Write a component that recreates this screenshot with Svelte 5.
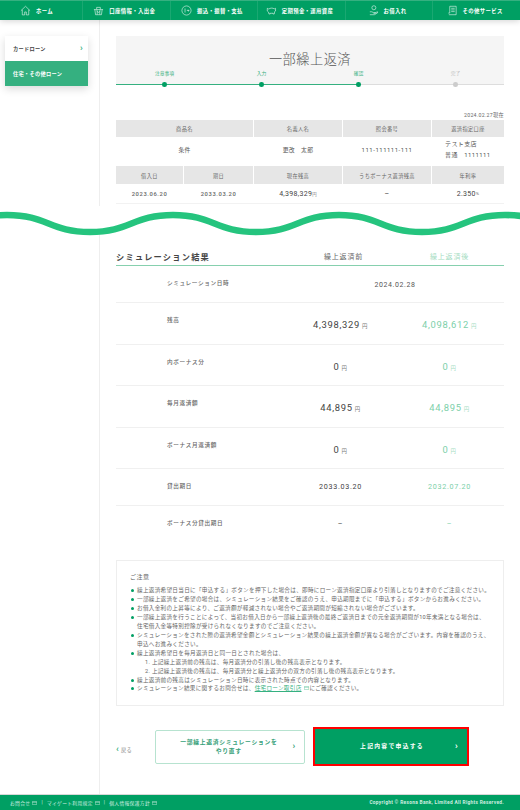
<script>
  const navItems = [
    { label: 'ホーム', icon: 'home' },
    { label: '口座情報・入出金', icon: 'basket' },
    { label: '振込・振替・支払', icon: 'transfer' },
    { label: '定期預金・運用資産', icon: 'piggy' },
    { label: 'お借入れ', icon: 'loan' },
    { label: 'その他サービス', icon: 'doc' }
  ];

  const steps = [
    { label: '注意事項', done: true },
    { label: '入力', done: true },
    { label: '確認', done: true },
    { label: '完了', done: false }
  ];

  const results = [
    { label: '残高', before: '4,398,329', after: '4,098,612', yen: true },
    { label: '内ボーナス分', before: '0', after: '0', yen: true },
    { label: '毎月返済額', before: '44,895', after: '44,895', yen: true },
    { label: 'ボーナス月返済額', before: '0', after: '0', yen: true },
    { label: '貸出期日', before: '2033.03.20', after: '2032.07.20', short: true },
    { label: 'ボーナス分貸出期日', before: '–', after: '–', short: true, last: true }
  ];

  const notes = [
    '繰上返済希望日当日に「申込する」ボタンを押下した場合は、即時にローン返済指定口座より引落しとなりますのでご注意ください。',
    '一部繰上返済をご希望の場合は、シミュレーション結果をご確認のうえ、申込期限までに「申込する」ボタンからお進みください。',
    'お借入金利の上昇等により、ご返済額が軽減されない場合やご返済期間が短縮されない場合がございます。',
    '一部繰上返済を行うことによって、当初お借入日から一部繰上返済後の最終ご返済日までの元金返済期間が10年未満となる場合は、\n住宅借入金等特別控除が受けられなくなりますのでご注意ください。',
    'シミュレーションをされた際の返済希望金額とシミュレーション結果の繰上返済金額が異なる場合がございます。内容を確認のうえ、\n申込へお進みください。'
  ];

  const footerLinks = ['お問合せ', 'マイゲート利用規定', '個人情報保護方針'];
</script>

<div class="page">
  <header class="nav">
    {#each navItems as item}
      <a class="nav-item" href="#top">
        <svg class="nav-icon" viewBox="0 0 12 12" fill="none" stroke="#fff" stroke-width="0.6">
          {#if item.icon === 'home'}
            <path d="M1 6.2 6 1.4l5 4.8M2.5 5.2v5.6h2.6V7.6h1.8v3.2h2.6V5.2" />
          {:else if item.icon === 'basket'}
            <path d="M1 5h10M2 5l.8 5.6h6.4L10 5M4.4 5V6.4a1.6 1.6 0 0 0 3.2 0V5M4 4.6V2.6h4v2M4.6 7v3.4M7.4 7v3.4" />
          {:else if item.icon === 'transfer'}
            <circle cx="6" cy="6" r="5" />
            <path d="M4.4 3.8v4.4M6.4 6h2.4M7.8 5l1 1-1 1" />
          {:else if item.icon === 'piggy'}
            <path d="M1.4 3.6 3 4.4c1.4-1.2 4.6-1.4 6-.2l1.4-.6v3l-1 .6-.4 2.6H7.6V9h-3v.8H3.2L2.8 7.8 1.4 6.6z" />
          {:else if item.icon === 'loan'}
            <circle cx="6.4" cy="3" r="2.2" />
            <path d="M2 7.4h2l2 .8h2v1H6M8 8.4l2.4-1v1.2L7 10.6H2" />
          {:else}
            <path d="M3 1.4h7v9.2H2M3 1.4v7.4H1.4M4.6 3.6h3.8M4.6 5.4h3.8M4.6 7.2h3.8" />
          {/if}
        </svg>
        <span>{item.label}</span>
      </a>
    {/each}
  </header>

  <div class="body">
    <aside class="side">
      <div class="side-card">
        <a class="side-link" href="#top">カードローン<i class="side-chev">›</i></a>
        <a class="side-link active" href="#top">住宅・その他ローン</a>
      </div>
    </aside>

    <main class="main">
      <section class="heading">
        <h1>一部繰上返済</h1>
        <ol class="steps">
          {#each steps as step}
            <li class:done={step.done}><span>{step.label}</span><b></b></li>
          {/each}
        </ol>
      </section>

      <p class="as-of">2024.02.27現在</p>

      <div class="loan-table">
        <div class="th wide">商品名</div>
        <div class="th">名義人名</div>
        <div class="th">照会番号</div>
        <div class="th">返済指定口座</div>

        <div class="td td-tall wide">条件</div>
        <div class="td td-tall">更改　太郎</div>
        <div class="td td-tall num">111-111111-111</div>
        <div class="td td-tall account">テスト支店<br />普通　1111111</div>

        <div class="th th2">借入日</div>
        <div class="th th2">期日</div>
        <div class="th th2">現在残高</div>
        <div class="th th2">うちボーナス返済残高</div>
        <div class="th th2">年利率</div>

        <div class="td td-low strong">2023.06.20</div>
        <div class="td td-low strong">2033.03.20</div>
        <div class="td td-low big">4,398,329<small>円</small></div>
        <div class="td td-low big">–</div>
        <div class="td td-low big">2.350<small>%</small></div>
      </div>

      <section class="results">
        <div class="results-head">
          <h2>シミュレーション結果</h2>
          <span class="before">繰上返済前</span>
          <span class="after">繰上返済後</span>
        </div>

        <div class="row row-first">
          <div class="row-label">シミュレーション日時</div>
          <div class="row-date">2024.02.28</div>
        </div>

        {#each results as r}
          <div class="row" class:row-short={r.short} class:row-last={r.last}>
            <div class="row-label">{r.label}</div>
            <div class="val" class:val-small={r.short}>{r.before}{#if r.yen}<small>円</small>{/if}</div>
            <div class="val after" class:val-small={r.short}>{r.after}{#if r.yen}<small>円</small>{/if}</div>
          </div>
        {/each}
      </section>

      <section class="notes">
        <h3>ご注意</h3>
        <ul>
          {#each notes as note}
            <li class="note-line">{note}</li>
          {/each}
          <li>
            繰上返済希望日を毎月返済日と同一日とされた場合は、
            <ol>
              <li>上記繰上返済前の残高は、毎月返済分の引落し後の残高表示となります。</li>
              <li>上記繰上返済後の残高は、毎月返済分と繰上返済分の双方の引落し後の残高表示となります。</li>
            </ol>
          </li>
          <li>繰上返済前の残高はシミュレーション日時に表示された時点での内容となります。</li>
          <li>シミュレーション結果に関するお問合せは、<a href="#top">住宅ローン取引店</a><svg class="ext green" viewBox="0 0 8 6"><path d="M.5.5h7v5h-7zM.5 2h7" /></svg>にご確認ください。</li>
        </ul>
      </section>

      <div class="actions">
        <a class="back" href="#top"><i>‹</i>戻る</a>
        <a class="btn btn-sub" href="#top"><span>一部繰上返済シミュレーションを<br />やり直す</span><i>›</i></a>
        <a class="btn btn-main" href="#top"><span>上記内容で申込する</span><i>›</i></a>
      </div>
    </main>
  </div>

  <svg class="wave" viewBox="0 0 520 32" width="520" height="32">
    <path d="M-76 26C-36 26-33 9 7 9C47 9 50 26 90 26C130 26 133 9 173 9C213 9 216 26 256 26C296 26 299 9 339 9C379 9 382 26 422 26C462 26 465 9 505 9C545 9 548 26 588 26V0H-76Z" fill="#fff" />
    <path d="M-76 26C-36 26-33 9 7 9C47 9 50 26 90 26C130 26 133 9 173 9C213 9 216 26 256 26C296 26 299 9 339 9C379 9 382 26 422 26C462 26 465 9 505 9C545 9 548 26 588 26" fill="none" stroke="#25c47e" stroke-width="6.6" />
  </svg>

  <footer class="foot">
    <div class="foot-links">
      {#each footerLinks as link, i}
        {#if i > 0}<span class="pipe">|</span>{/if}
        <a href="#top">{link}<svg class="ext" viewBox="0 0 8 6"><path d="M.5.5h7v5h-7zM.5 2h7" /></svg></a>
      {/each}
    </div>
    <span class="copy">Copyright © Resona Bank, Limited All Rights Reserved.</span>
  </footer>
</div>

<style>
  :global(body) {
    margin: 0;
    background: #fff;
  }

  .page {
    --green: #009f63;
    --soft: #7ccfa9;
    position: relative;
    width: 520px;
    height: 810px;
    overflow: hidden;
    display: flex;
    flex-direction: column;
    font-family: Roboto, "Noto Sans CJK JP", sans-serif;
    color: #444;
  }

  a {
    text-decoration: none;
    color: inherit;
  }

  i {
    font-style: normal;
  }

  h1, h2, h3, p, ul, ol {
    margin: 0;
    padding: 0;
    list-style: none;
    font-weight: inherit;
  }

  .nav {
    display: grid;
    grid-template-columns: 82px repeat(5, 1fr);
    height: 20px;
    flex: none;
    background: var(--green);
    border-top: 1px solid #35b080;
    box-sizing: border-box;
    box-shadow: 0 1px 6px rgba(0, 0, 0, 0.18);
    position: relative;
    z-index: 1;
  }

  .nav-item {
    display: flex;
    align-items: center;
    justify-content: center;
    gap: 5px;
    padding-right: 4px;
    color: #fff;
    font-size: 5.4px;
    font-weight: 700;
    letter-spacing: 0.35px;
    border-left: 1px solid rgba(255, 255, 255, 0.1);
  }

  .nav-item:first-child {
    border-left: 0;
    padding-right: 9px;
  }

  .nav-icon {
    width: 11px;
    height: 11px;
    flex: none;
  }

  .body {
    flex: 1;
    display: flex;
    min-height: 0;
  }

  .side {
    width: 100px;
    flex: none;
    box-sizing: border-box;
    padding: 16px 0 0 5px;
    border-right: 1px solid #eee;
  }

  .side-card {
    width: 83px;
    box-shadow: 0 3px 8px rgba(0, 0, 0, 0.15);
  }

  .side-link {
    display: flex;
    align-items: center;
    justify-content: space-between;
    height: 25px;
    padding: 0 5px 0 8px;
    box-sizing: border-box;
    background: #fff;
    font-size: 5.2px;
    font-weight: 700;
    letter-spacing: 0.3px;
    color: #444;
  }

  .side-link.active {
    background: #35b080;
    color: #fff;
  }

  .side-chev {
    color: #35b080;
    font-size: 9px;
    line-height: 1;
  }

  .main {
    flex: 1;
    padding: 16px 16px 0 16px;
    min-width: 0;
  }

  .heading {
    height: 48px;
    background: #f5f5f5;
    position: relative;
  }

  .heading h1 {
    text-align: center;
    padding-top: 14px;
    font-size: 13.2px;
    line-height: 20px;
    letter-spacing: 0.5px;
    color: #555;
    font-weight: 300;
  }

  .steps {
    position: absolute;
    left: 0;
    right: 0;
    bottom: -1px;
    display: grid;
    grid-template-columns: repeat(4, 1fr);
    height: 14px;
    border-bottom: 1px solid #ddd;
  }

  .steps::after {
    content: "";
    position: absolute;
    left: 0;
    bottom: -1px;
    width: 62.6%;
    height: 1px;
    background: #35b080;
  }

  .steps li {
    position: relative;
    text-align: center;
    font-size: 4.8px;
    line-height: 7px;
    color: #bbb;
  }

  .steps li.done {
    color: #35b080;
  }

  .steps li b {
    position: absolute;
    left: 50%;
    bottom: -3px;
    z-index: 1;
    width: 4.6px;
    height: 4.6px;
    margin-left: -2.3px;
    border-radius: 50%;
    background: #ccc;
  }

  .steps li.done b {
    background: var(--green);
  }

  .as-of {
    margin-top: 26px;
    height: 10px;
    line-height: 10px;
    text-align: right;
    font-size: 5.2px;
    letter-spacing: 0.3px;
    color: #666;
  }

  .loan-table {
    display: grid;
    grid-template-columns: 67px 69px 88px 88px 1fr;
    column-gap: 1px;
    align-items: stretch;
    border-bottom: 1px solid #f2f2f2;
  }

  .th {
    display: flex;
    align-items: center;
    justify-content: center;
    height: 17px;
    background: #e6e6e6;
    font-size: 5.2px;
    letter-spacing: 0.4px;
    color: #666;
  }

  .th2 {
    height: 18px;
  }

  .wide {
    grid-column: span 2;
  }

  .td {
    display: flex;
    align-items: center;
    justify-content: center;
    font-size: 5.8px;
    letter-spacing: 0.3px;
    color: #555;
  }

  .td-tall {
    height: 25px;
    margin-bottom: 4px;
  }

  .td-low {
    height: 19px;
  }

  .num {
    font-size: 6px;
    letter-spacing: 0.5px;
  }

  .account {
    justify-content: flex-start;
    padding-left: 13px;
    line-height: 10.5px;
    font-size: 6px;
    letter-spacing: 0.4px;
  }

  .strong {
    font-weight: 500;
    letter-spacing: 0.6px;
    color: #666;
  }

  .big {
    font-size: 7px;
    font-weight: 400;
    letter-spacing: 0.3px;
    color: #444;
  }

  .big small {
    font-size: 4.4px;
    font-weight: 400;
    color: #777;
  }

  .results {
    margin-top: 42px;
  }

  .results-head {
    display: grid;
    grid-template-columns: 170px 109px 1fr;
    align-items: center;
    height: 19px;
    border-bottom: 1px solid #86d0ae;
    text-align: center;
    font-size: 7px;
    letter-spacing: 0.8px;
    color: #666;
  }

  .results-head h2 {
    text-align: left;
    font-size: 8.2px;
    font-weight: 700;
    letter-spacing: 1.25px;
    color: #444;
  }

  .results-head .before {
    padding-left: 6px;
  }

  .results-head .after {
    color: #a5dcc2;
  }

  .row {
    display: grid;
    grid-template-columns: 170px 109px 1fr;
    height: 41.5px;
    box-sizing: border-box;
    border-bottom: 1px solid #f0f0f0;
  }

  .row-first {
    height: 37px;
  }

  .row-short {
    height: 37px;
  }

  .row-last {
    height: 54px;
    border-bottom: 0;
  }

  .row-label {
    padding: 13px 0 0 51px;
    font-size: 5.6px;
    line-height: 8px;
    font-weight: 500;
    letter-spacing: 0.65px;
    color: #666;
  }

  .row-date {
    grid-column: span 2;
    padding-top: 15px;
    text-align: center;
    font-size: 7px;
    line-height: 9px;
    letter-spacing: 0.6px;
    color: #555;
  }

  .val {
    padding-top: 16px;
    text-align: center;
    font-size: 9.4px;
    line-height: 12px;
    font-weight: 400;
    letter-spacing: 0.7px;
    color: #444;
  }

  .val small {
    margin-left: 2px;
    font-size: 5.4px;
    font-weight: 400;
    color: #777;
  }

  .val.after {
    color: #7ccfa9;
  }

  .val.after small {
    color: #a5dcc2;
  }

  .val-small {
    padding-top: 12px;
    font-size: 7.2px;
    letter-spacing: 0.7px;
  }

  .notes {
    height: 146px;
    box-sizing: border-box;
    border: 1px solid #eee;
    padding: 11px 12px 0 13px;
    color: #666;
    font-size: 5.6px;
    line-height: 8.95px;
    letter-spacing: 0.3px;
  }

  .notes h3 {
    font-size: 6px;
    line-height: 9px;
    letter-spacing: 0.5px;
    margin-bottom: 5px;
  }

  .notes ul > li {
    position: relative;
    padding-left: 7px;
  }

  .notes .note-line {
    white-space: pre-line;
  }

  .notes ul > li::before {
    content: "";
    position: absolute;
    left: 1px;
    top: 3px;
    width: 3px;
    height: 3px;
    border-radius: 50%;
    background: var(--green);
  }

  .notes ol {
    padding-left: 8px;
    counter-reset: note;
  }

  .notes ol li {
    counter-increment: note;
  }

  .notes ol li::before {
    content: counter(note) ". ";
  }

  .notes a {
    color: #35b080;
    text-decoration: underline;
  }

  .ext {
    display: inline-block;
    width: 5px;
    height: 4px;
    margin-left: 2px;
    fill: none;
    stroke: #fff;
    stroke-width: 0.6;
  }

  .ext.green {
    stroke: #35b080;
    margin-right: 1px;
  }

  .actions {
    display: flex;
    align-items: center;
    margin-top: 21px;
    height: 39px;
  }

  .back {
    width: 39px;
    flex: none;
    font-size: 5.2px;
    letter-spacing: 0.3px;
    color: #888;
    margin-top: 5px;
  }

  .back i {
    color: #35b080;
    font-size: 9px;
    line-height: 1;
    font-weight: 700;
    margin-right: 2px;
  }

  .btn {
    display: flex;
    align-items: center;
    box-sizing: border-box;
    font-size: 5.8px;
    font-weight: 700;
    letter-spacing: 0.7px;
    line-height: 9px;
    text-align: center;
  }

  .btn span {
    flex: 1;
  }

  .btn i {
    font-size: 9px;
    line-height: 1;
    flex: none;
    margin-right: 8px;
  }

  .btn-sub {
    width: 150px;
    height: 34px;
    border: 1px solid #b7e3d0;
    border-radius: 2px;
    color: #35a078;
    margin-right: 8px;
    padding-left: 9px;
  }

  .btn-main {
    width: 156px;
    height: 39px;
    border: 2.5px solid #f00;
    background: var(--green);
    color: #fff;
    letter-spacing: 1.3px;
    padding-left: 14px;
  }

  .foot {
    position: absolute;
    left: 0;
    right: 0;
    bottom: 0;
    height: 16px;
    display: flex;
    align-items: center;
    justify-content: space-between;
    padding: 0 16px 0 10px;
    background: var(--green);
    border-top: 1px solid #d8d8d8;
    box-sizing: border-box;
    color: #cfeee0;
    font-size: 4.8px;
    letter-spacing: 0.3px;
  }

  .foot-links {
    display: flex;
    align-items: center;
    gap: 4px;
  }

  .copy {
    font-weight: 700;
    letter-spacing: 0.3px;
  }

  .wave {
    position: absolute;
    left: 0;
    top: 206px;
    display: block;
  }
</style>
